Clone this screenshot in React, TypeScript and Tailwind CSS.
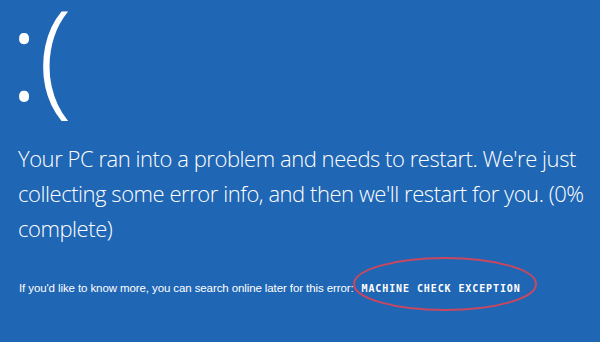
export default function App() {
    return (
        <div className="w-[600px] h-[342px] bg-[#1f66b4] text-white overflow-hidden flex flex-col pl-[14px] font-['Open_Sans',sans-serif]">
            {/* sad face */}
            <div className="h-[104px] -ml-[5px] text-[126px] leading-[104px] font-light tracking-[-1px]">:(</div>

            {/* message */}
            <p className="mt-[37px] pl-[4px] w-[590px] text-[22px] leading-[35px] font-light tracking-[-0.45px]">
                Your PC ran into a problem and needs to restart. We're just collecting some error info, and then we'll restart for you. (0% complete)
            </p>

            {/* error line */}
            <div className="mt-[34px] pl-[5px] flex items-center text-[11.5px] font-['Liberation_Sans_Narrow','Liberation_Sans',sans-serif]">
                <span className="tracking-[-0.1px]">If you'd like to know more, you can search online later for this error:</span>
                <span className="relative ml-[8px]">
                    <span className="font-['DejaVu_Sans_Mono',monospace] font-bold text-[10px] tracking-[0.9px]">MACHINE CHECK EXCEPTION</span>
                    <svg className="absolute left-[-10px] top-[-24px]" width="186" height="56" viewBox="0 0 186 56">
                        <ellipse cx="93" cy="28" rx="91" ry="26" fill="none" stroke="#c9485f" strokeWidth="2" />
                    </svg>
                </span>
            </div>
        </div>
    );
}
